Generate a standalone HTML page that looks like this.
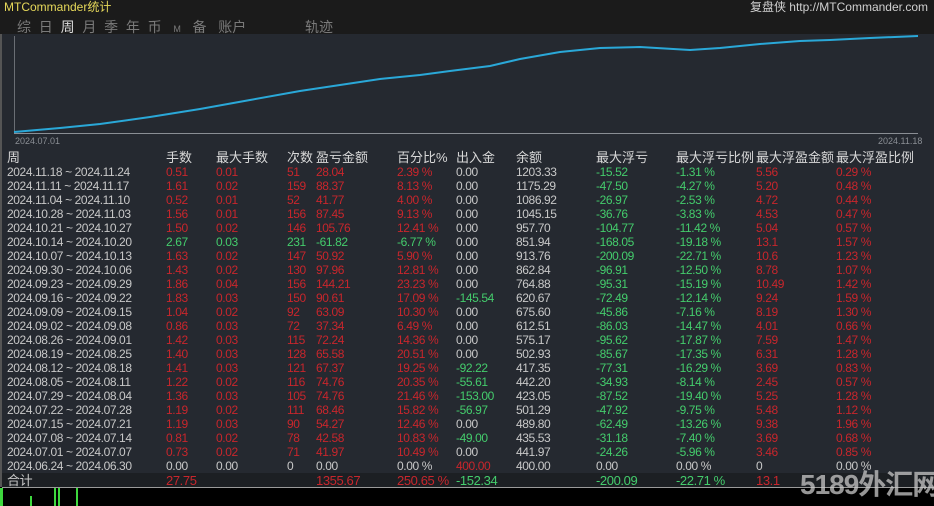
<!DOCTYPE html>
<html><head><meta charset="utf-8"><style>
html,body{margin:0;width:934px;height:506px;overflow:hidden}
body{background:#000;position:relative;font-family:"Liberation Sans","Noto Sans CJK SC",sans-serif;font-size:12px;color:#c8c8c8}
#top{position:absolute;left:0;top:0;width:934px;height:34px;background:#1b1b1b}
#main{position:absolute;left:0;top:34px;width:932px;height:453px;background:#252930;border-left:2px solid #555}
.r{position:absolute;left:7px;height:14px;line-height:14px;white-space:nowrap;display:flex;letter-spacing:-0.4px}
.r span{display:inline-block;overflow:visible}
.c0{width:159px}.c1{width:50px}.c2{width:71px}.c3{width:29px}.c4{width:81px}.c5{width:59px}.c6{width:60px}.c7{width:80px}.c8{width:80px}.c9{width:80px}.c10{width:80px}.c11{width:80px}
.R{color:#c8262c}.G{color:#44cc6c}
.h{font-size:13px;color:#d8d8d8;letter-spacing:0}
</style></head><body>
<div id="top"></div>
<div style="position:absolute;left:4px;top:-2px;color:#e6d85a;font-size:12px">MTCommander统计</div>
<div style="position:absolute;right:6px;top:-2px;color:#d0d0d0;font-size:12px">复盘侠 http://MTCommander.com</div>
<div style="position:absolute;left:17px;top:17px;color:#7a7a7a;font-size:14px;white-space:nowrap">综&nbsp;&nbsp;日&nbsp;&nbsp;<span style="color:#d8d8d8">周</span>&nbsp;&nbsp;月&nbsp;&nbsp;季&nbsp;&nbsp;年&nbsp;&nbsp;币&nbsp;&nbsp;&nbsp;<span style="font-size:9px">M</span>&nbsp;&nbsp;&nbsp;备&nbsp;&nbsp;&nbsp;账户</div>
<div style="position:absolute;left:305px;top:17px;color:#7a7a7a;font-size:14px">轨迹</div>
<div id="main"></div>
<svg style="position:absolute;left:0;top:0" width="934" height="150">
<line x1="14" y1="133.5" x2="918" y2="133.5" stroke="#8a8e94" stroke-width="1"/>
<line x1="14.5" y1="36" x2="14.5" y2="133" stroke="#6a6e74" stroke-width="1"/>
<polyline fill="none" stroke="#2aa8d8" stroke-width="2" points="14,132 60,128 100,124 150,117 200,109 250,100 300,91 340,85 380,79 420,75 450,71 490,66 520,59 560,52 600,48 640,47 690,50 720,48 760,44 800,41 830,40 870,38 918,36"/>
<text x="15" y="144" fill="#8a8e94" font-size="9" font-family="Liberation Sans">2024.07.01</text>
<text x="878" y="144" fill="#8a8e94" font-size="9" font-family="Liberation Sans">2024.11.18</text>
</svg>
<div class="r h" style="top:151px"><span class="c0">周</span><span class="c1">手数</span><span class="c2">最大手数</span><span class="c3">次数</span><span class="c4">盈亏金额</span><span class="c5">百分比%</span><span class="c6">出入金</span><span class="c7">余额</span><span class="c8">最大浮亏</span><span class="c9">最大浮亏比例</span><span class="c10">最大浮盈金额</span><span class="c11">最大浮盈比例</span></div>
<div class="r" style="top:165px"><span class="c0">2024.11.18 ~ 2024.11.24</span><span class="c1 R">0.51</span><span class="c2 R">0.01</span><span class="c3 R">51</span><span class="c4 R">28.04</span><span class="c5 R">2.39 %</span><span class="c6">0.00</span><span class="c7">1203.33</span><span class="c8 G">-15.52</span><span class="c9 G">-1.31 %</span><span class="c10 R">5.56</span><span class="c11 R">0.29 %</span></div>
<div class="r" style="top:179px"><span class="c0">2024.11.11 ~ 2024.11.17</span><span class="c1 R">1.61</span><span class="c2 R">0.02</span><span class="c3 R">159</span><span class="c4 R">88.37</span><span class="c5 R">8.13 %</span><span class="c6">0.00</span><span class="c7">1175.29</span><span class="c8 G">-47.50</span><span class="c9 G">-4.27 %</span><span class="c10 R">5.20</span><span class="c11 R">0.48 %</span></div>
<div class="r" style="top:193px"><span class="c0">2024.11.04 ~ 2024.11.10</span><span class="c1 R">0.52</span><span class="c2 R">0.01</span><span class="c3 R">52</span><span class="c4 R">41.77</span><span class="c5 R">4.00 %</span><span class="c6">0.00</span><span class="c7">1086.92</span><span class="c8 G">-26.97</span><span class="c9 G">-2.53 %</span><span class="c10 R">4.72</span><span class="c11 R">0.44 %</span></div>
<div class="r" style="top:207px"><span class="c0">2024.10.28 ~ 2024.11.03</span><span class="c1 R">1.56</span><span class="c2 R">0.01</span><span class="c3 R">156</span><span class="c4 R">87.45</span><span class="c5 R">9.13 %</span><span class="c6">0.00</span><span class="c7">1045.15</span><span class="c8 G">-36.76</span><span class="c9 G">-3.83 %</span><span class="c10 R">4.53</span><span class="c11 R">0.47 %</span></div>
<div class="r" style="top:221px"><span class="c0">2024.10.21 ~ 2024.10.27</span><span class="c1 R">1.50</span><span class="c2 R">0.02</span><span class="c3 R">146</span><span class="c4 R">105.76</span><span class="c5 R">12.41 %</span><span class="c6">0.00</span><span class="c7">957.70</span><span class="c8 G">-104.77</span><span class="c9 G">-11.42 %</span><span class="c10 R">5.04</span><span class="c11 R">0.57 %</span></div>
<div class="r" style="top:235px"><span class="c0">2024.10.14 ~ 2024.10.20</span><span class="c1 G">2.67</span><span class="c2 G">0.03</span><span class="c3 G">231</span><span class="c4 G">-61.82</span><span class="c5 G">-6.77 %</span><span class="c6">0.00</span><span class="c7">851.94</span><span class="c8 G">-168.05</span><span class="c9 G">-19.18 %</span><span class="c10 R">13.1</span><span class="c11 R">1.57 %</span></div>
<div class="r" style="top:249px"><span class="c0">2024.10.07 ~ 2024.10.13</span><span class="c1 R">1.63</span><span class="c2 R">0.02</span><span class="c3 R">147</span><span class="c4 R">50.92</span><span class="c5 R">5.90 %</span><span class="c6">0.00</span><span class="c7">913.76</span><span class="c8 G">-200.09</span><span class="c9 G">-22.71 %</span><span class="c10 R">10.6</span><span class="c11 R">1.23 %</span></div>
<div class="r" style="top:263px"><span class="c0">2024.09.30 ~ 2024.10.06</span><span class="c1 R">1.43</span><span class="c2 R">0.02</span><span class="c3 R">130</span><span class="c4 R">97.96</span><span class="c5 R">12.81 %</span><span class="c6">0.00</span><span class="c7">862.84</span><span class="c8 G">-96.91</span><span class="c9 G">-12.50 %</span><span class="c10 R">8.78</span><span class="c11 R">1.07 %</span></div>
<div class="r" style="top:277px"><span class="c0">2024.09.23 ~ 2024.09.29</span><span class="c1 R">1.86</span><span class="c2 R">0.04</span><span class="c3 R">156</span><span class="c4 R">144.21</span><span class="c5 R">23.23 %</span><span class="c6">0.00</span><span class="c7">764.88</span><span class="c8 G">-95.31</span><span class="c9 G">-15.19 %</span><span class="c10 R">10.49</span><span class="c11 R">1.42 %</span></div>
<div class="r" style="top:291px"><span class="c0">2024.09.16 ~ 2024.09.22</span><span class="c1 R">1.83</span><span class="c2 R">0.03</span><span class="c3 R">150</span><span class="c4 R">90.61</span><span class="c5 R">17.09 %</span><span class="c6 G">-145.54</span><span class="c7">620.67</span><span class="c8 G">-72.49</span><span class="c9 G">-12.14 %</span><span class="c10 R">9.24</span><span class="c11 R">1.59 %</span></div>
<div class="r" style="top:305px"><span class="c0">2024.09.09 ~ 2024.09.15</span><span class="c1 R">1.04</span><span class="c2 R">0.02</span><span class="c3 R">92</span><span class="c4 R">63.09</span><span class="c5 R">10.30 %</span><span class="c6">0.00</span><span class="c7">675.60</span><span class="c8 G">-45.86</span><span class="c9 G">-7.16 %</span><span class="c10 R">8.19</span><span class="c11 R">1.30 %</span></div>
<div class="r" style="top:319px"><span class="c0">2024.09.02 ~ 2024.09.08</span><span class="c1 R">0.86</span><span class="c2 R">0.03</span><span class="c3 R">72</span><span class="c4 R">37.34</span><span class="c5 R">6.49 %</span><span class="c6">0.00</span><span class="c7">612.51</span><span class="c8 G">-86.03</span><span class="c9 G">-14.47 %</span><span class="c10 R">4.01</span><span class="c11 R">0.66 %</span></div>
<div class="r" style="top:333px"><span class="c0">2024.08.26 ~ 2024.09.01</span><span class="c1 R">1.42</span><span class="c2 R">0.03</span><span class="c3 R">115</span><span class="c4 R">72.24</span><span class="c5 R">14.36 %</span><span class="c6">0.00</span><span class="c7">575.17</span><span class="c8 G">-95.62</span><span class="c9 G">-17.87 %</span><span class="c10 R">7.59</span><span class="c11 R">1.47 %</span></div>
<div class="r" style="top:347px"><span class="c0">2024.08.19 ~ 2024.08.25</span><span class="c1 R">1.40</span><span class="c2 R">0.03</span><span class="c3 R">128</span><span class="c4 R">65.58</span><span class="c5 R">20.51 %</span><span class="c6">0.00</span><span class="c7">502.93</span><span class="c8 G">-85.67</span><span class="c9 G">-17.35 %</span><span class="c10 R">6.31</span><span class="c11 R">1.28 %</span></div>
<div class="r" style="top:361px"><span class="c0">2024.08.12 ~ 2024.08.18</span><span class="c1 R">1.41</span><span class="c2 R">0.03</span><span class="c3 R">121</span><span class="c4 R">67.37</span><span class="c5 R">19.25 %</span><span class="c6 G">-92.22</span><span class="c7">417.35</span><span class="c8 G">-77.31</span><span class="c9 G">-16.29 %</span><span class="c10 R">3.69</span><span class="c11 R">0.83 %</span></div>
<div class="r" style="top:375px"><span class="c0">2024.08.05 ~ 2024.08.11</span><span class="c1 R">1.22</span><span class="c2 R">0.02</span><span class="c3 R">116</span><span class="c4 R">74.76</span><span class="c5 R">20.35 %</span><span class="c6 G">-55.61</span><span class="c7">442.20</span><span class="c8 G">-34.93</span><span class="c9 G">-8.14 %</span><span class="c10 R">2.45</span><span class="c11 R">0.57 %</span></div>
<div class="r" style="top:389px"><span class="c0">2024.07.29 ~ 2024.08.04</span><span class="c1 R">1.36</span><span class="c2 R">0.03</span><span class="c3 R">105</span><span class="c4 R">74.76</span><span class="c5 R">21.46 %</span><span class="c6 G">-153.00</span><span class="c7">423.05</span><span class="c8 G">-87.52</span><span class="c9 G">-19.40 %</span><span class="c10 R">5.25</span><span class="c11 R">1.28 %</span></div>
<div class="r" style="top:403px"><span class="c0">2024.07.22 ~ 2024.07.28</span><span class="c1 R">1.19</span><span class="c2 R">0.02</span><span class="c3 R">111</span><span class="c4 R">68.46</span><span class="c5 R">15.82 %</span><span class="c6 G">-56.97</span><span class="c7">501.29</span><span class="c8 G">-47.92</span><span class="c9 G">-9.75 %</span><span class="c10 R">5.48</span><span class="c11 R">1.12 %</span></div>
<div class="r" style="top:417px"><span class="c0">2024.07.15 ~ 2024.07.21</span><span class="c1 R">1.19</span><span class="c2 R">0.03</span><span class="c3 R">90</span><span class="c4 R">54.27</span><span class="c5 R">12.46 %</span><span class="c6">0.00</span><span class="c7">489.80</span><span class="c8 G">-62.49</span><span class="c9 G">-13.26 %</span><span class="c10 R">9.38</span><span class="c11 R">1.96 %</span></div>
<div class="r" style="top:431px"><span class="c0">2024.07.08 ~ 2024.07.14</span><span class="c1 R">0.81</span><span class="c2 R">0.02</span><span class="c3 R">78</span><span class="c4 R">42.58</span><span class="c5 R">10.83 %</span><span class="c6 G">-49.00</span><span class="c7">435.53</span><span class="c8 G">-31.18</span><span class="c9 G">-7.40 %</span><span class="c10 R">3.69</span><span class="c11 R">0.68 %</span></div>
<div class="r" style="top:445px"><span class="c0">2024.07.01 ~ 2024.07.07</span><span class="c1 R">0.73</span><span class="c2 R">0.02</span><span class="c3 R">71</span><span class="c4 R">41.97</span><span class="c5 R">10.49 %</span><span class="c6">0.00</span><span class="c7">441.97</span><span class="c8 G">-24.26</span><span class="c9 G">-5.96 %</span><span class="c10 R">3.46</span><span class="c11 R">0.85 %</span></div>
<div class="r" style="top:459px"><span class="c0">2024.06.24 ~ 2024.06.30</span><span class="c1">0.00</span><span class="c2">0.00</span><span class="c3">0</span><span class="c4">0.00</span><span class="c5">0.00 %</span><span class="c6 R">400.00</span><span class="c7">400.00</span><span class="c8">0.00</span><span class="c9">0.00 %</span><span class="c10">0</span><span class="c11">0.00 %</span></div>
<div style="position:absolute;left:2px;top:473px;width:932px;height:14px;background:#1c1f23;border-bottom:1px solid #9a9a9a"></div>
<div class="r" style="top:474px;font-size:13px"><span class="c0">合计</span><span class="c1 R">27.75</span><span class="c2"></span><span class="c3"></span><span class="c4 R">1355.67</span><span class="c5 R">250.65 %</span><span class="c6 G">-152.34</span><span class="c7"></span><span class="c8 G">-200.09</span><span class="c9 G">-22.71 %</span><span class="c10 R">13.1</span><span class="c11"></span></div>
<div style="position:absolute;left:0;top:488px;width:3px;height:18px;background:#3ed83e"></div>
<div style="position:absolute;left:30px;top:496px;width:2px;height:10px;background:#3ed83e"></div>
<div style="position:absolute;left:54px;top:488px;width:2px;height:18px;background:#3ed83e"></div>
<div style="position:absolute;left:58px;top:488px;width:2px;height:18px;background:#3ed83e"></div>
<div style="position:absolute;left:76px;top:488px;width:2px;height:18px;background:#3ed83e"></div>
<div style="position:absolute;left:800px;top:468px;font-size:28px;line-height:34px;font-weight:bold;color:rgba(200,200,200,0.75);letter-spacing:-1px;white-space:nowrap">5189外汇网</div>
</body></html>
